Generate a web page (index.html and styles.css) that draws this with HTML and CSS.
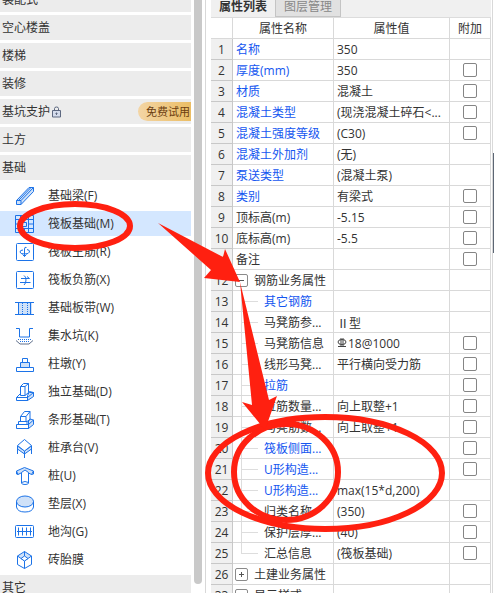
FILE: index.html
```html
<!DOCTYPE html>
<html lang="zh-CN">
  <head>
    <meta charset="utf-8">
    <meta name="viewport" content="width=device-width">
    <title>属性列表</title>
    <link rel="stylesheet" href="styles.css">
  </head>
  <body>
    <div class="app">
      <nav class="sidebar">
        <div class="menu">
          <a class="group" href="#">装配式</a>
          <a class="group" href="#">空心楼盖</a>
          <a class="group" href="#">楼梯</a>
          <a class="group" href="#">装修</a>
          <a class="group" href="#">基坑支护
            <svg class="lock" viewBox="0 0 11 12"><path class="body" d="M1.5 4.500h8v6.500h-8z"/><path d="M3.500 4.500V2.500Q3.500 1 5.500 1T7.500 2.500V4.500M5.500 6.500v2.500M4.500 7.500h2"/></svg>
            <span class="trial">免费试用</span>
          </a>
          <a class="group" href="#">土方</a>
          <a class="group" href="#">基础</a>
          <a class="item" href="#">
            <svg class="icon" viewBox="0 0 20 20"><path class="fill" d="M1.500 14.500L14 1.500h4.500v4L6 18.500h-4.500z"/><path d="M1.500 14.500h4.500v4M6 14.500L18.500 1.500M3.500 14.500L16 1.500"/></svg>
            基础梁(F)</a>
          <a class="item active" href="#">
            <svg class="icon" viewBox="0 0 20 20"><path d="M.5 1.500h18v17h-18zM5.500 1.500v17M13.500 1.500v17M.5 5.500h18M.5 14.500h18M9.500 1.500v4M9.500 14.500v4M.5 10h5M13.500 10h5M7.500 8.500h4v4h-4z"/></svg>
            筏板基础(M)</a>
          <a class="item" href="#">
            <svg class="icon" viewBox="0 0 20 20"><rect x="1.500" y="1.500" width="17" height="17" rx="1"/><path d="M11.500 5.500q-2-1-2 1.500v7.500M7.500 12.500l2 2 2-2M8 8q-3 0-3 2t4.500 2 5-2-2.500-2.500"/></svg>
            筏板主筋(R)</a>
          <a class="item" href="#">
            <svg class="icon" viewBox="0 0 20 20"><rect x="1.500" y="1.500" width="17" height="17" rx="1"/><path d="M6 8.500h8.500M5 12.500h10.500M12 6.500l2.500 2M9 5.500q2 1 2 4.500t-2 5"/></svg>
            筏板负筋(X)</a>
          <a class="item" href="#">
            <svg class="icon" viewBox="0 0 20 20"><path class="pale" d="M3 4h14v12H3z"/><path d="M0 4.500h19M0 16.500h19M3.500 4v12M15.500 4v12"/><path class="dots" d="M7.500 5v11M12.500 5v11"/></svg>
            基础板带(W)</a>
          <a class="item" href="#">
            <svg class="icon" viewBox="0 0 20 20"><path d="M1 2.500h3.500v8.500h10V2.500H18"/><path class="dots" d="M3 13.500h14M5 15.500h10"/><path class="grey" d="M1 14.500l4 3.500h9l4-3.500"/></svg>
            集水坑(K)</a>
          <a class="item" href="#">
            <svg class="icon" viewBox="0 0 20 20"><path d="M7.500 4.500h5v4h-5zM1.500 13.500h17v4h-17z"/><path class="fill" d="M5.500 8.500h9v5h-9z"/></svg>
            柱墩(Y)</a>
          <a class="item" href="#">
            <svg class="icon" viewBox="0 0 20 20"><path class="fill" d="M12.500 18.500l6-4v-4l-4-1-2 4z"/><path d="M1.500 15.500h11v3h-11zM12.500 15.500l6-5h-4M1.500 15.500l4-4M5.500 13.500V4.500l3-3h5v9l-3.500 3zM5.500 4.500h4.500v9M10 4.500l3.500-3"/></svg>
            独立基础(D)</a>
          <a class="item" href="#">
            <svg class="icon" viewBox="0 0 20 20"><path class="fill" d="M13.500 18.500l5-4V10l-3.500-1-1.500 2z"/><path d="M1.500 14.500h12v4h-12zM3.500 14.500v-3h8.500v3M5.500 11.500V6.500l4-5h5.500v8l-3 2M5.500 6.500H11v5M11 6.500l4-5M13.500 14.500l5-4.500"/></svg>
            条形基础(T)</a>
          <a class="item" href="#">
            <svg class="icon" viewBox="0 0 20 20"><path class="fill" d="M2.500 8l7 5 7-5v3l-7 5-7-5z"/><path class="white" d="M9.500 1.500l7 6-7 5.500-7-5.500z"/><path d="M2.500 8v8M16.500 8v8M9.500 13v7"/></svg>
            桩承台(V)</a>
          <a class="item" href="#">
            <svg class="icon" viewBox="0 0 20 20"><path class="fill" d="M1.500 5l8-3.500 9 3.500-2 3.500-3-1.500H6L3 8.500z"/><path class="white" d="M6.500 6.500v10.500q0 1.500 3.500 1.500t3.500-1.500V6.500L10 4z"/><path d="M6.500 16.500q3.500-2 7 0M1.500 5v3l1.500.5M18.500 5v3l-2 .5"/></svg>
            桩(U)</a>
          <a class="item" href="#">
            <svg class="icon" viewBox="0 0 20 20"><ellipse class="fill" cx="10" cy="7.500" rx="8.500" ry="5.500"/><path d="M1.500 7.500V13q1 5 8.500 5t8.500-5V7.500"/></svg>
            垫层(X)</a>
          <a class="item" href="#">
            <svg class="icon" viewBox="0 0 20 20"><rect x=".5" y="3.500" width="18" height="12" rx="1"/><path d="M3.500 5.500v8M7.500 5.500v8M11.500 5.500v8M15.500 5.500v8M2 9.500h15"/></svg>
            地沟(G)</a>
          <a class="item" href="#">
            <svg class="icon" viewBox="0 0 20 20"><path class="fill" d="M9.500 1.500l7 4.500-7 5-7-5z"/><path class="white" d="M9.500 6L13 8.500l-3.500 2.500L6 8.500z"/><path d="M2.500 6v8.500l7 4 7-4V6M9.500 11v7.500M9.500 1.500V6"/></svg>
            砖胎膜</a>
          <a class="group" href="#">其它</a>
        </div>
        <div class="scroll"></div>
      </nav>
      <main class="panel">
        <div class="tabs">
          <button class="tab current">属性列表</button>
          <button class="tab">图层管理</button>
        </div>
        <table class="props">
          <colgroup><col class="c-num"><col class="c-name"><col><col class="c-add"></colgroup>
          <thead>
            <tr><th></th><th>属性名称</th><th>属性值</th><th>附加</th></tr>
          </thead>
          <tbody>
            <tr><th>1</th><td class="key">名称</td><td>350</td><td></td></tr>
            <tr><th>2</th><td class="key">厚度(mm)</td><td>350</td><td><input type="checkbox" aria-label="附加 厚度"></td></tr>
            <tr><th>3</th><td class="key">材质</td><td>混凝土</td><td><input type="checkbox" aria-label="附加 材质"></td></tr>
            <tr><th>4</th><td class="key">混凝土类型</td><td>(现浇混凝土碎石&lt;...</td><td><input type="checkbox" aria-label="附加 混凝土类型"></td></tr>
            <tr><th>5</th><td class="key">混凝土强度等级</td><td>(C30)</td><td><input type="checkbox" aria-label="附加 混凝土强度等级"></td></tr>
            <tr><th>6</th><td class="key">混凝土外加剂</td><td>(无)</td><td></td></tr>
            <tr><th>7</th><td class="key">泵送类型</td><td>(混凝土泵)</td><td></td></tr>
            <tr><th>8</th><td class="key">类别</td><td>有梁式</td><td><input type="checkbox" aria-label="附加 类别"></td></tr>
            <tr><th>9</th><td>顶标高(m)</td><td>-5.15</td><td><input type="checkbox" aria-label="附加 顶标高"></td></tr>
            <tr><th>10</th><td>底标高(m)</td><td>-5.5</td><td><input type="checkbox" aria-label="附加 底标高"></td></tr>
            <tr><th>11</th><td>备注</td><td></td><td><input type="checkbox" aria-label="附加 备注"></td></tr>
            <tr class="parent"><th>12</th><td><button class="fold open" aria-label="收起"></button>钢筋业务属性</td><td></td><td></td></tr>
            <tr class="sub"><th>13</th><td class="key">其它钢筋</td><td></td><td></td></tr>
            <tr class="sub"><th>14</th><td>马凳筋参...</td><td class="cjk">Ⅱ型</td><td></td></tr>
            <tr class="sub"><th>15</th><td>马凳筋信息</td><td><svg class="rebar" viewBox="0 0 10 10"><path d="M4 0v8M6 0v8M1 8.500h8"/><ellipse cx="5" cy="4" rx="4" ry="2.500"/></svg>18@1000</td><td><input type="checkbox" aria-label="附加 马凳筋信息"></td></tr>
            <tr class="sub"><th>16</th><td>线形马凳...</td><td>平行横向受力筋</td><td><input type="checkbox" aria-label="附加 线形马凳筋"></td></tr>
            <tr class="sub"><th>17</th><td class="key">拉筋</td><td></td><td><input type="checkbox" aria-label="附加 拉筋"></td></tr>
            <tr class="sub"><th>18</th><td>拉筋数量...</td><td>向上取整+1</td><td><input type="checkbox" aria-label="附加 拉筋数量"></td></tr>
            <tr class="sub"><th>19</th><td>马凳筋数...</td><td>向上取整+1</td><td><input type="checkbox" aria-label="附加 马凳筋数量"></td></tr>
            <tr class="sub"><th>20</th><td class="key">筏板侧面...</td><td></td><td><input type="checkbox" aria-label="附加 筏板侧面"></td></tr>
            <tr class="sub"><th>21</th><td class="key">U形构造...</td><td></td><td><input type="checkbox" aria-label="附加 U形构造"></td></tr>
            <tr class="sub"><th>22</th><td class="key">U形构造...</td><td>max(15*d,200)</td><td></td></tr>
            <tr class="sub"><th>23</th><td>归类名称</td><td>(350)</td><td><input type="checkbox" aria-label="附加 归类名称"></td></tr>
            <tr class="sub"><th>24</th><td>保护层厚...</td><td>(40)</td><td><input type="checkbox" aria-label="附加 保护层厚度"></td></tr>
            <tr class="sub last"><th>25</th><td>汇总信息</td><td>(筏板基础)</td><td><input type="checkbox" aria-label="附加 汇总信息"></td></tr>
            <tr class="parent"><th>26</th><td><button class="fold" aria-label="展开"></button>土建业务属性</td><td></td><td></td></tr>
            <tr class="parent"><th>33</th><td><button class="fold" aria-label="展开"></button>显示样式</td><td></td><td></td></tr>
          </tbody>
        </table>
      </main>
      <div class="edge"><div class="thumb"></div></div>
    </div>
    <!-- hand drawn marks over the window -->
    <svg class="marks" viewBox="0 0 494 593">
      <ellipse cx="75" cy="226" rx="55" ry="22"/>
      <ellipse cx="325" cy="473" rx="117" ry="56"/>
      <ellipse cx="286" cy="472" rx="52" ry="48"/>
      <path d="M158 223L223 257L225 249L240 282L204 278L211 270Z"/>
      <path d="M240 282L269 400L277 396L265 430L242 402L252 405Z"/>
    </svg>
  </body>
</html>
```

FILE: styles.css
```css
* {
  box-sizing: border-box;
}
body {
  margin: 0;
  height: 100vh;
  overflow: hidden;
  background: #fff;
  color: #333;
  font: 12px/20px "Open Sans", "Noto Sans CJK SC", sans-serif;
}
.app {
  display: flex;
  height: 100vh;
  overflow: hidden;
}

/* component list */
.sidebar {
  display: flex;
  flex: 0 0 206px;
  gap: 3px;
  border-right: 1px solid #d8d8d8;
}
.menu {
  display: flex;
  flex-direction: column;
  flex: 0 0 191px;
  gap: 3px;
  margin-top: -13px;
}
.group,
.item {
  display: flex;
  flex: 0 0 25px;
  align-items: center;
  color: #333;
  text-decoration: none;
}
.group {
  padding-left: 2px;
  background: #ececec;
}
.item {
  gap: 13px;
  padding-left: 15px;
}
.item.active {
  background: #d4e7ff;
}
.icon {
  width: 20px;
  height: 20px;
  fill: none;
  stroke: #1c73e8;
}
.icon .fill {
  fill: #cfe1f8;
}
.icon .white {
  fill: #fff;
}
.icon .pale {
  fill: #cfe1f8;
  stroke: none;
}
.icon .dots {
  stroke-dasharray: 1 1;
}
.icon .grey {
  stroke: #5f6f8c;
}
.lock {
  width: 11px;
  height: 12px;
  margin-left: 1px;
  fill: none;
  stroke: #5d6880;
}
.lock .body {
  fill: #d5dcec;
}
.trial {
  margin-left: auto;
  padding-left: 8px;
  width: 53px;
  height: 19px;
  line-height: 19px;
  border-radius: 10px 0 0 10px;
  background: linear-gradient(90deg, #f3d5a5, #ebbd64);
  color: #6b3d10;
  font-size: 11px;
  white-space: nowrap;
}
.scroll {
  width: 8px;
  height: 584px;
  border-radius: 0 0 4px 4px;
  background: #c9c9c9;
}

/* property table */
.panel {
  flex: 1;
  min-width: 0;
  margin-left: 5px;
}
.tabs {
  display: flex;
  height: 18px;
  background: #f0f0f0;
  border-bottom: 1px solid #dcdcdc;
}
.tab {
  width: 65px;
  padding: 0 0 4px;
  border: 0;
  border-right: 1px solid #c4c4c4;
  border-bottom: 1px solid #c4c4c4;
  background: #e1e1e1;
  color: #888;
  font: 12px/13px "Open Sans", "Noto Sans CJK SC", sans-serif;
}
.tab.current {
  background: #f0f0f0;
  border-bottom: 0;
  color: #333;
  font-weight: bold;
}
.props {
  width: 100%;
  table-layout: fixed;
  border-collapse: separate;
  border-spacing: 0;
}
.c-num {
  width: 22px;
}
.c-name {
  width: 101px;
}
.c-add {
  width: 41px;
}
.props th,
.props td {
  height: 21px;
  padding: 2px 0 0 3px;
  border-right: 1px solid #d9d9d9;
  border-bottom: 1px solid #d9d9d9;
  font-weight: normal;
  line-height: 18px;
  text-align: left;
  white-space: nowrap;
  overflow: hidden;
}
.props thead th {
  padding: 2px 0 0;
  text-align: center;
}
.props tbody th {
  padding: 2px 0 0;
  background: #f0f0f0;
  border-color: #c8c8c8;
  text-align: center;
}
.props td:last-child {
  padding: 0;
  text-align: center;
}
.props .key {
  color: #1456f0;
}
.props .cjk {
  font-family: "Noto Sans CJK SC", sans-serif;
}
.props input {
  appearance: none;
  display: block;
  width: 14px;
  height: 14px;
  margin: 0 auto;
  border: 1px solid #858585;
  border-radius: 2px;
  background: #fff;
}
.props .parent td:nth-child(2) {
  padding-left: 2px;
}
.fold {
  width: 13px;
  height: 13px;
  margin: -2px 6px 0 0;
  padding: 0;
  border: 1px solid #8a8a8a;
  border-radius: 2px;
  vertical-align: middle;
  background:
    linear-gradient(#555, #555) center / 5px 1px no-repeat,
    linear-gradient(#555, #555) center / 1px 5px no-repeat,
    #fff;
}
.fold.open {
  background: linear-gradient(#555, #555) center / 5px 1px no-repeat, #fff;
}
/* tree lines: a trunk and a branch */
.props .sub td:nth-child(2) {
  padding-left: 31px;
  background:
    linear-gradient(#ddd, #ddd) 8px 0 / 1px 100% no-repeat,
    linear-gradient(#ddd, #ddd) 8px 10px / 17px 1px no-repeat;
}
.props .sub.last td:nth-child(2) {
  background:
    linear-gradient(#ddd, #ddd) 8px 0 / 1px 10px no-repeat,
    linear-gradient(#ddd, #ddd) 8px 10px / 17px 1px no-repeat;
}
.rebar {
  width: 10px;
  height: 10px;
  margin-right: 1px;
  fill: none;
  stroke: #444;
}
.edge {
  flex: 0 0 2px;
  margin-left: 1px;
  border-left: 1px solid #d9d9d9;
}
.thumb {
  height: 100px;
  margin-top: 153px;
  background: #5c6674;
}

.marks {
  position: absolute;
  top: 0;
  left: 0;
  width: 494px;
  height: 593px;
  fill: none;
  stroke: #ff2010;
  stroke-width: 6px;
  pointer-events: none;
}
.marks path {
  fill: #ff2010;
  stroke: none;
}
```
